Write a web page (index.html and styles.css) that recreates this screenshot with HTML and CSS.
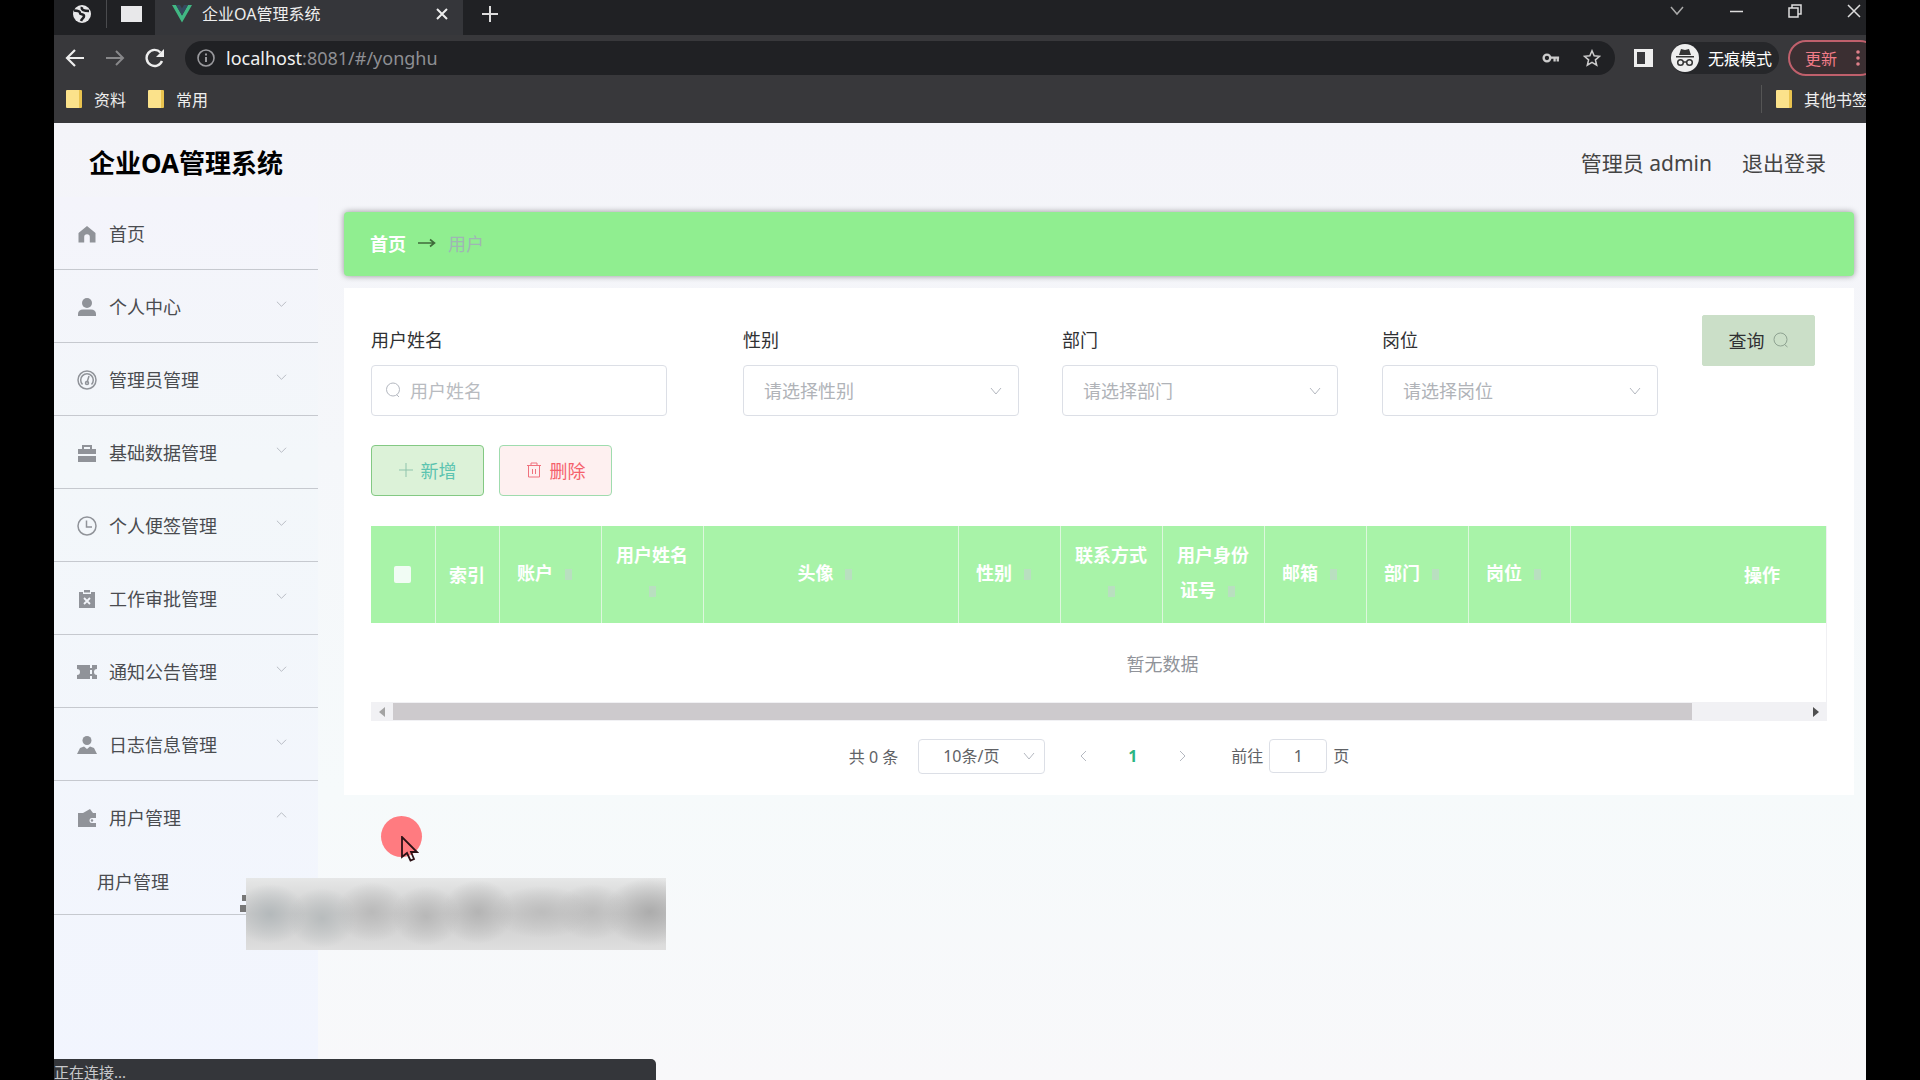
FILE: index.html
```html
<!DOCTYPE html>
<html lang="zh-CN">
<head>
  <meta charset="UTF-8" />
  <meta name="viewport" content="width=device-width, initial-scale=1.0"/>
  <title>企业OA管理系统</title>
  <link rel="stylesheet" href="styles.css">
</head>
<body>
  <div class="window">

    <!-- browser -->
    <div class="tabstrip">
      <div class="pinned">
        <svg width="20" height="20" viewBox="0 0 20 20"><circle cx="10" cy="10" r="9" fill="#e8e8ea"/><path d="M2 6.500c3 0 6 .5 6 2.500s4 .5 4 3-2 2-3 5M10 3c-1 3 2 4 7 4" fill="none" stroke="#202124" stroke-width="2.600"/></svg>
        <span class="sep"></span>
        <span class="blank-icon"></span>
      </div>
      <div class="tab">
        <svg width="20" height="18" viewBox="0 0 20 18"><path d="M0 0h4l6 10.500L16 0h4L10 17.500z" fill="#41b883"/><path d="M4 0h4l2 3.500L12 0h4L10 10.500z" fill="#35495e"/></svg>
        <span class="tab-title">企业OA管理系统</span>
        <button class="icon-btn" aria-label="关闭标签页"><svg width="12" height="12" viewBox="0 0 12 12"><path d="M1 1l10 10M11 1L1 11" stroke="#eee" stroke-width="2"/></svg></button>
      </div>
      <button class="icon-btn new-tab" aria-label="新标签页"><svg width="16" height="16" viewBox="0 0 16 16"><path d="M8 0v16M0 8h16" stroke="#ddd" stroke-width="2"/></svg></button>
      <div class="win-buttons">
        <button class="icon-btn" aria-label="搜索标签页"><svg width="14" height="14" viewBox="0 0 14 14"><path d="M1 3l6 7 6-7" fill="none" stroke="#aaa" stroke-width="1.500"/></svg></button>
        <button class="icon-btn" aria-label="最小化"><svg width="14" height="14" viewBox="0 0 14 14"><path d="M1 7.500h13" stroke="#ddd" stroke-width="1.500"/></svg></button>
        <button class="icon-btn" aria-label="还原"><svg width="14" height="14" viewBox="0 0 14 14"><path d="M1 4h9v9H1zM4 4V1h9v9h-3" fill="none" stroke="#ddd" stroke-width="1.500"/></svg></button>
        <button class="icon-btn" aria-label="关闭"><svg width="14" height="14" viewBox="0 0 14 14"><path d="M1 1l12 12M13 1L1 13" stroke="#ddd" stroke-width="1.500"/></svg></button>
      </div>
    </div>

    <div class="toolbar">
      <button class="icon-btn" aria-label="后退"><svg width="20" height="20" viewBox="0 0 20 20"><path d="M19 10H2M10 2l-8 8 8 8" fill="none" stroke="#eee" stroke-width="2.200"/></svg></button>
      <button class="icon-btn" aria-label="前进"><svg width="20" height="20" viewBox="0 0 20 20"><path d="M1 10h17M11 3l7 7-7 7" fill="none" stroke="#88888a" stroke-width="2"/></svg></button>
      <button class="icon-btn" aria-label="刷新"><svg width="20" height="20" viewBox="0 0 20 20"><path d="M17 13a8 8 0 1 1-1.500-8.500" fill="none" stroke="#eee" stroke-width="2.400"/><path d="M19 1v8h-8z" fill="#eee"/></svg></button>
      <div class="address">
        <svg width="18" height="18" viewBox="0 0 18 18"><circle cx="9" cy="9" r="8" fill="none" stroke="#9a9a9e" stroke-width="1.600"/><path d="M9 8v5M9 4.500v2" stroke="#9a9a9e" stroke-width="2"/></svg>
        <span class="url"><b>localhost</b>:8081/#/yonghu</span>
        <svg width="18" height="14" viewBox="0 0 20 14"><circle cx="5.500" cy="7" r="3.700" fill="none" stroke="#ccc" stroke-width="2.600"/><path d="M9 6.500h10M14 7v4M17.500 7v4" stroke="#ccc" stroke-width="2.600"/></svg>
        <svg width="18" height="18" viewBox="0 0 20 20"><path d="M10 2l2.400 5.600 6 .5-4.600 4 1.400 5.900L10 14.800 4.800 18l1.400-5.900-4.600-4 6-.5z" fill="none" stroke="#ccc" stroke-width="1.700"/></svg>
      </div>
      <svg class="panel-icon" width="19" height="18" viewBox="0 0 19 18"><path d="M0 0h19v18H0zM3 3v12h8V3z" fill="#eee" fill-rule="evenodd"/></svg>
      <div class="incognito">
        <svg width="28" height="28" viewBox="0 0 28 28"><circle cx="14" cy="14" r="14" fill="#eee"/><path d="M8 11l2-6 4 1 4-1 2 6zM5 12h18v1.500H5z" fill="#333"/><g fill="none" stroke="#333" stroke-width="1.500"><circle cx="9.500" cy="18.500" r="2.800"/><circle cx="18.500" cy="18.500" r="2.800"/><path d="M12 18h4"/></g></svg>
        <span>无痕模式</span>
      </div>
      <button class="update">更新<svg width="4" height="18" viewBox="0 0 4 18" fill="#e0808a"><circle cx="2" cy="3" r="1.800"/><circle cx="2" cy="9" r="1.800"/><circle cx="2" cy="15" r="1.800"/></svg></button>
    </div>

    <div class="bookmarks">
      <span class="bookmark"><i class="folder"></i>资料</span>
      <span class="bookmark"><i class="folder"></i>常用</span>
      <span class="bookmark other"><i class="folder"></i>其他书签</span>
    </div>

    <!-- page -->
    <div class="page">
      <header class="header">
        <h1>企业OA管理系统</h1>
        <div class="user">
          <span>管理员 admin</span>
          <a href="#">退出登录</a>
        </div>
      </header>

      <div class="layout">
        <nav class="sidebar">
          <a class="item" href="#">
            <svg class="icon" viewBox="0 0 20 20"><path d="M10 2l8.500 7v9.500h-5.700V13a2.800 2.800 0 0 0-5.600 0v5.500H1.500V9z"/></svg>首页
          </a>
          <a class="item" href="#">
            <svg class="icon" viewBox="0 0 20 20"><circle cx="10" cy="6" r="5"/><path d="M1 19v-2c0-3 2-4.500 5-4.500h8c3 0 5 1.500 5 4.500v2z"/></svg>个人中心
            <svg class="arrow" viewBox="0 0 12 12"><path d="M1 3l5 5 5-5"/></svg>
          </a>
          <a class="item" href="#">
            <svg class="icon line" viewBox="0 0 20 20"><circle cx="10" cy="10" r="9"/><path d="M5.500 14.500a6.300 6.300 0 1 1 9 0M10 12.500l2-6.500"/><circle cx="10" cy="13" r="1.500"/></svg>管理员管理
            <svg class="arrow" viewBox="0 0 12 12"><path d="M1 3l5 5 5-5"/></svg>
          </a>
          <a class="item" href="#">
            <svg class="icon" viewBox="0 0 20 20"><path d="M1 6h4V2h10v4h4v5H1zM7 4v2h6V4zM1 13h18v6H1z" fill-rule="evenodd"/></svg>基础数据管理
            <svg class="arrow" viewBox="0 0 12 12"><path d="M1 3l5 5 5-5"/></svg>
          </a>
          <a class="item" href="#">
            <svg class="icon line" viewBox="0 0 20 20"><circle cx="10" cy="10" r="9"/><path d="M9.500 4.500V11H15"/></svg>个人便签管理
            <svg class="arrow" viewBox="0 0 12 12"><path d="M1 3l5 5 5-5"/></svg>
          </a>
          <a class="item" href="#">
            <svg class="icon" viewBox="0 0 20 20"><path d="M2 3h4v2h8V3h4v16H2zM7 1h6v2.500H7z"/><path d="M7 9l6 6M13 9l-6 6" stroke="#f3f6fb" stroke-width="1.800"/></svg>工作审批管理
            <svg class="arrow" viewBox="0 0 12 12"><path d="M1 3l5 5 5-5"/></svg>
          </a>
          <a class="item" href="#">
            <svg class="icon" viewBox="0 0 20 20"><path d="M0 3h13v3h2V3h5v4a3 3 0 0 0 0 6v4h-5v-3h-2v3H0v-4a3 3 0 0 0 0-6zM13 8v4h2V8z" fill-rule="evenodd"/></svg>通知公告管理
            <svg class="arrow" viewBox="0 0 12 12"><path d="M1 3l5 5 5-5"/></svg>
          </a>
          <a class="item" href="#">
            <svg class="icon" viewBox="0 0 20 20"><circle cx="10" cy="5.500" r="4.500"/><path d="M0 19l3-6 4-1.500L10 14l3-2.500 4 1.500 3 6z"/></svg>日志信息管理
            <svg class="arrow" viewBox="0 0 12 12"><path d="M1 3l5 5 5-5"/></svg>
          </a>
          <div class="group">
            <a class="item" href="#">
              <svg class="icon" viewBox="0 0 20 20"><path d="M1 5h5l7-4 3 4h3v5h-4a2.500 2.500 0 0 0 0 5h4v4H1z"/><circle cx="15" cy="12.500" r="1.200"/></svg>用户管理
              <svg class="arrow" viewBox="0 0 12 12"><path d="M1 8l5-5 5 5"/></svg>
            </a>
            <a class="subitem" href="#">用户管理</a>
          </div>
        </nav>

        <main class="main">
          <div class="breadcrumb">
            <a href="#">首页</a>
            <svg width="18" height="10" viewBox="0 0 18 10"><path d="M0 5h16M12 1.500L16.500 5 12 8.500" fill="none" stroke="#3f6b3a" stroke-width="1.600"/></svg>
            <span>用户</span>
          </div>

          <div class="panel">
            <form class="search">
              <div class="field">
                <label for="name">用户姓名</label>
                <div class="control">
                  <svg class="prefix" width="16" height="16" viewBox="0 0 16 16"><circle cx="8" cy="7.500" r="6.500"/><path d="M11.500 12.500l2.500 2.500"/></svg>
                  <input id="name" type="text" placeholder="用户姓名">
                </div>
              </div>
              <div class="field">
                <label for="sex">性别</label>
                <div class="control">
                  <select id="sex"><option>请选择性别</option></select>
                  <svg class="caret" viewBox="0 0 12 12"><path d="M1 3l5 6 5-6"/></svg>
                </div>
              </div>
              <div class="field">
                <label for="dept">部门</label>
                <div class="control">
                  <select id="dept"><option>请选择部门</option></select>
                  <svg class="caret" viewBox="0 0 12 12"><path d="M1 3l5 6 5-6"/></svg>
                </div>
              </div>
              <div class="field">
                <label for="post">岗位</label>
                <div class="control">
                  <select id="post"><option>请选择岗位</option></select>
                  <svg class="caret" viewBox="0 0 12 12"><path d="M1 3l5 6 5-6"/></svg>
                </div>
              </div>
              <button type="button" class="btn query">查询<svg width="16" height="16" viewBox="0 0 16 16"><circle cx="7.500" cy="7.500" r="6.500"/><path d="M11.500 12.500l3 2.500"/></svg></button>
            </form>

            <div class="actions">
              <button class="btn add"><svg width="14" height="14" viewBox="0 0 14 14"><path d="M7 0v14M0 7h14"/></svg>新增</button>
              <button class="btn del"><svg width="16" height="16" viewBox="0 0 16 16"><path d="M1 3.500h14M5 3V1h6v2M2.500 4v11h11V4M6.500 7v5M9.500 7v5"/></svg>删除</button>
            </div>

            <div class="table-wrap">
              <table>
                <colgroup>
                  <col class="w-s"><col class="w-s"><col class="w-m"><col class="w-m"><col class="w-l"><col class="w-m"><col class="w-m"><col class="w-m"><col class="w-m"><col class="w-m"><col class="w-m"><col class="w-xl">
                </colgroup>
                <thead>
                  <tr>
                    <th><input type="checkbox" aria-label="全选"></th>
                    <th>索引</th>
                    <th>账户<i class="sort"></i></th>
                    <th>用户姓名<i class="sort"></i></th>
                    <th>头像<i class="sort"></i></th>
                    <th>性别<i class="sort"></i></th>
                    <th>联系方式<i class="sort"></i></th>
                    <th>用户身份证号<i class="sort"></i></th>
                    <th>邮箱<i class="sort"></i></th>
                    <th>部门<i class="sort"></i></th>
                    <th>岗位<i class="sort"></i></th>
                    <th>操作</th>
                  </tr>
                </thead>
                <tbody>
                  <tr><td colspan="12">暂无数据</td></tr>
                </tbody>
              </table>
            </div>
            <div class="scrollbar">
              <svg width="6" height="10" viewBox="0 0 6 10"><path d="M6 0v10L0 5z" fill="#a3a3a3"/></svg>
              <div class="track"><div class="thumb"></div></div>
              <svg width="6" height="10" viewBox="0 0 6 10"><path d="M0 0v10l6-5z" fill="#505050"/></svg>
            </div>

            <div class="pagination">
              <span>共 0 条</span>
              <div class="control size">
                <select aria-label="每页条数"><option>10条/页</option></select>
                <svg class="caret" viewBox="0 0 12 12"><path d="M1 3l5 6 5-6"/></svg>
              </div>
              <button class="pager" aria-label="上一页"><svg width="8" height="12" viewBox="0 0 8 12"><path d="M7 1L2 6l5 5"/></svg></button>
              <button class="pager current">1</button>
              <button class="pager" aria-label="下一页"><svg width="8" height="12" viewBox="0 0 8 12"><path d="M1 1l5 5-5 5"/></svg></button>
              <label class="jump">前往<input type="text" value="1">页</label>
            </div>
          </div>
        </main>
      </div>
    </div>

    <div class="mosaic"></div>
    <div class="pointer">
      <svg width="18" height="28" viewBox="0 0 18 28"><path d="M1 1v20l5-4 3.500 7.500 3.500-1.500-3-7h6z" fill="none" stroke="#2b1216" stroke-width="1.800"/></svg>
    </div>
    <div class="status">正在连接...</div>
  </div>
</body>
</html>
```
FILE: styles.css
```css
* {
  box-sizing: border-box;
}

body {
  margin: 0;
  background: #000;
  font-family: 'Noto Sans', 'Noto Sans CJK SC', sans-serif;
  font-size: 18px;
  color: #303133;
}

a {
  color: inherit;
  text-decoration: none;
}

button,
input,
select {
  font: inherit;
  color: inherit;
}

svg {
  flex-shrink: 0;
}

.window {
  position: relative;
  display: flex;
  flex-direction: column;
  height: 100vh;
  margin: 0 54px;
  overflow: hidden;
}

/* browser */
.icon-btn {
  display: flex;
  align-items: center;
  justify-content: center;
  width: 20px;
  padding: 0;
  border: none;
  background: none;
}

.tabstrip {
  display: flex;
  height: 35px;
  padding-bottom: 7px;
  background: #202124;
}

.pinned {
  display: flex;
  align-items: center;
  gap: 14px;
  width: 101px;
  padding-left: 18px;
}

.sep {
  width: 1px;
  height: 28px;
  background: #4a4b4e;
}

.blank-icon {
  width: 21px;
  height: 16px;
  background: #e8e8ea;
}

.tab {
  display: flex;
  align-items: center;
  width: 308px;
  margin-bottom: -7px;
  padding: 0 11px 7px 17px;
  background: #35363a;
}

.tab-title {
  flex: 1;
  margin-left: 10px;
  font-size: 16px;
  line-height: 24px;
  color: #eee;
}

.new-tab {
  margin-left: 17px;
}

.win-buttons {
  display: flex;
  gap: 39px;
  height: 22px;
  margin-left: auto;
  padding-right: 2px;
}

.toolbar {
  display: flex;
  align-items: center;
  height: 46px;
  padding-left: 11px;
  background: #38383b;
}

.toolbar > .icon-btn {
  flex-shrink: 0;
  margin-right: 20px;
}

.address {
  display: flex;
  flex: 1;
  align-items: center;
  gap: 23px;
  height: 34px;
  padding: 0 14px 0 12px;
  border-radius: 17px;
  background: #202124;
}

.url {
  flex: 1;
  margin-left: -12px;
  line-height: 34px;
  color: #8e8f93;
}

.url b {
  font-weight: 400;
  color: #f1f1f1;
}

.panel-icon {
  margin: 0 18px 0 19px;
}

.incognito {
  display: flex;
  align-items: center;
  gap: 9px;
  height: 32px;
  padding-right: 7px;
  border-radius: 16px;
  background: #26272a;
  font-size: 16px;
  color: #fff;
}

.update {
  display: flex;
  align-items: center;
  gap: 19px;
  height: 36px;
  margin: 0 -12px 0 9px;
  padding: 0 16px 0 15px;
  border: 2px solid #c0606c;
  border-radius: 18px;
  background: #3b2f32;
  font-size: 16px;
  color: #f07c88;
}

.bookmarks {
  display: flex;
  gap: 22px;
  height: 42px;
  padding: 4px 0 10px 12px;
  background: #38383b;
  font-size: 16px;
  color: #eee;
}

.bookmark {
  display: flex;
  align-items: center;
  gap: 12px;
  white-space: nowrap;
}

.folder {
  width: 16px;
  height: 18px;
  border-right: 3px solid #e9c34f;
  border-radius: 1px;
  background: #fbe28b;
}

.other {
  margin: 0 -2px 0 auto;
  padding-left: 14px;
  border-left: 1px solid #555;
}

/* page */
.page {
  display: flex;
  flex: 1;
  flex-direction: column;
  background: linear-gradient(#f4f4f9, #f6fafb 70%, #f8f8fa);
}

.header {
  display: flex;
  align-items: center;
  justify-content: space-between;
  height: 74px;
  padding: 5px 40px 0 35px;
}

.header h1 {
  margin: 0;
  font-size: 26px;
  line-height: 36px;
  color: #000;
}

.user {
  display: flex;
  gap: 30px;
  font-size: 21px;
  line-height: 30px;
  color: #444;
}

.layout {
  display: flex;
  flex: 1;
}

.sidebar {
  width: 264px;
  background: linear-gradient(#f4f4fb, #f3f7fa 30%, #f2f5fe);
}

.item {
  display: flex;
  align-items: center;
  height: 73px;
  padding: 2px 31px 0 23px;
  border-bottom: 1px solid #c6c9cf;
}

.item,
.subitem {
  line-height: 28px;
  color: #4a4c50;
}

.icon {
  width: 20px;
  height: 20px;
  margin-right: 12px;
  fill: #909399;
}

.icon.line {
  fill: none;
  stroke: #909399;
  stroke-width: 1.5;
}

.arrow,
.caret,
.prefix,
.btn svg,
.pager svg {
  fill: none;
  stroke: #b4b8c0;
}

.arrow {
  width: 11px;
  height: 11px;
  margin: 0 0 6px auto;
}

.group {
  border-bottom: 1px solid #c6c9cf;
}

.group .item {
  height: 72px;
  border: none;
}

.subitem {
  display: block;
  padding: 15px 43px 18px;
}

.main {
  flex: 1;
  min-width: 0;
  padding: 15px 12px 0 26px;
}

.breadcrumb {
  display: flex;
  align-items: center;
  height: 64px;
  padding: 0 26px 2px;
  border-radius: 4px;
  background: #90ee90;
  box-shadow: 0 0 6px rgba(0, 0, 0, 0.4);
}

.breadcrumb a {
  font-weight: 700;
  color: #fff;
}

.breadcrumb svg {
  margin: 0 12px;
}

.breadcrumb span {
  color: #9fb6b4;
}

.panel {
  margin-top: 12px;
  padding: 27px 27px 22px;
  background: #fff;
}

.search {
  display: grid;
  grid-template-columns: 372fr 319fr 320fr 320fr 125fr;
}

.field label {
  display: block;
  padding: 11px 0;
  line-height: 28px;
}

.control {
  position: relative;
  width: 276px;
  max-width: 90%;
}

.field:first-child .control {
  width: 296px;
}

.control input,
.control select {
  width: 100%;
  height: 51px;
  padding: 0 20px;
  border: 1px solid #dcdfe6;
  border-radius: 4px;
  background: #fff;
  color: #b0b3b8;
  appearance: none;
}

.control input {
  padding-left: 38px;
}

.control input::placeholder {
  color: #b8bbc0;
}

.prefix {
  position: absolute;
  top: 17px;
  left: 14px;
}

.caret {
  position: absolute;
  top: 50%;
  right: 17px;
  width: 12px;
  height: 12px;
  margin-top: -6px;
}

.btn {
  display: flex;
  align-items: center;
  justify-content: center;
  gap: 8px;
  width: 113px;
  height: 51px;
  padding: 0 0 2px;
  border: 1px solid #90ee90;
  border-radius: 4px;
}

.query {
  border-color: #cbdfc8;
  border-radius: 2px;
  background: #cbdfc8;
}

.btn.query svg {
  stroke: #8fa392;
}

.actions {
  display: flex;
  gap: 15px;
  margin: 29px 0 30px;
}

.add {
  border-color: #83c983;
  background: #dcf2d8;
  color: #5cc4b0;
}

.btn.add svg {
  stroke: #8fc4ac;
}

.del {
  border-color: #9fdcae;
  background: #fef0f0;
  color: #f5616c;
}

.btn.del svg {
  stroke: #f0727e;
}

.table-wrap {
  overflow: hidden;
  border-right: 1px solid #f0f0f3;
}

table {
  width: 1583px;
  table-layout: fixed;
  border-collapse: collapse;
}

.w-s {
  width: 64px;
}

.w-m {
  width: 102px;
}

.w-l {
  width: 255px;
}

.w-xl {
  width: 384px;
}

th {
  height: 97px;
  padding: 0 12px;
  border-right: 1px solid #ddf7dd;
  background: #a8f3a8;
  line-height: 34px;
  color: #fff;
}

th input {
  display: block;
  width: 17px;
  height: 17px;
  margin: 0 auto;
  border-radius: 2px;
  background: #f1fcf4;
  appearance: none;
}

.sort {
  display: inline-block;
  width: 30px;
  height: 40px;
  background: linear-gradient(#b9dfc0, #b9dfc0) center / 7px 11px no-repeat;
  vertical-align: middle;
}

td {
  height: 79px;
  padding: 0;
  text-align: center;
  color: #909399;
}

.scrollbar {
  display: flex;
  align-items: center;
  gap: 8px;
  height: 19px;
  padding: 0 8px;
  background: #f1f1f4;
}

.track {
  flex: 1;
}

.thumb {
  width: 92%;
  height: 17px;
  background: #cdcacd;
}

.pagination {
  display: flex;
  align-items: center;
  justify-content: center;
  height: 34px;
  margin-top: 18px;
  font-size: 16px;
  color: #606266;
}

.size {
  width: 127px;
  margin: 0 20px;
}

.control.size select {
  height: 35px;
  padding: 0 24px;
  color: #606266;
}

.size .caret {
  right: 10px;
}

.pager {
  width: 35px;
  margin-right: 15px;
  padding: 0;
  border: none;
  background: none;
}

.current {
  font-weight: 700;
  color: #2bb583;
}

.jump {
  margin-left: 16px;
}

.jump input {
  width: 58px;
  height: 34px;
  margin: 0 6px;
  border: 1px solid #dcdfe6;
  border-radius: 4px;
  text-align: center;
}

/* overlays */
.mosaic {
  position: absolute;
  top: 878px;
  left: 192px;
  width: 420px;
  height: 72px;
  background:
    radial-gradient(36px 30px at 24px 36px, #b4b9bb, transparent),
    radial-gradient(34px 30px at 76px 40px, #b8bcbd, transparent),
    radial-gradient(36px 30px at 126px 34px, #bababa, transparent),
    radial-gradient(34px 30px at 180px 38px, #b8b8b8, transparent),
    radial-gradient(36px 32px at 232px 34px, #b4b4b4, transparent),
    radial-gradient(50px 26px at 296px 34px, #bdbdbd, transparent),
    radial-gradient(36px 28px at 346px 34px, #bdbdbd, transparent),
    radial-gradient(46px 34px at 404px 34px, #acacac, transparent),
    linear-gradient(#e6e7e7, #cdcdcd 50%, #dedede);
}

.mosaic::before {
  content: "";
  position: absolute;
  top: 17px;
  left: -6px;
  width: 6px;
  height: 17px;
  background:
    linear-gradient(#777, #777) right top / 4px 6px no-repeat,
    linear-gradient(#777, #777) left bottom / 6px 7px no-repeat;
}

.pointer {
  position: absolute;
  top: 816px;
  left: 327px;
  width: 41px;
  height: 41px;
  padding: 20px 0 0 20px;
  border-radius: 50%;
  background: #ff7b80;
}

.status {
  position: absolute;
  bottom: 0;
  left: 0;
  width: 602px;
  height: 21px;
  overflow: hidden;
  border-radius: 0 5px 0 0;
  background: #34363a;
  font-size: 15px;
  line-height: 26px;
  color: #c8c9cc;
}
```
